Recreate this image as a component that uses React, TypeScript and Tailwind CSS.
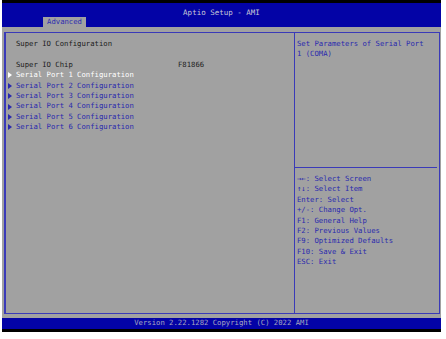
import React from "react";

const mono = { fontFamily: '"DejaVu Sans Mono", "Liberation Mono", monospace' };

function Row({ arrow, children, cls }: { arrow?: boolean; children: React.ReactNode; cls: string }) {
  return (
    <div className={`flex h-[10.4px] items-center ${cls}`}>
      <span className="w-[9px] flex items-center">
        {arrow && (
          <svg width="4" height="6" viewBox="0 0 4 6" className="ml-[1px]">
            <path d="M0 0 L4 3 L0 6 Z" fill="currentColor" />
          </svg>
        )}
      </span>
      <span className="whitespace-pre">{children}</span>
    </div>
  );
}

export default function App() {
  const ports = [1, 2, 3, 4, 5, 6];
  const help = [
    "→←: Select Screen",
    "↑↓: Select Item",
    "Enter: Select",
    "+/-: Change Opt.",
    "F1: General Help",
    "F2: Previous Values",
    "F9: Optimized Defaults",
    "F10: Save & Exit",
    "ESC: Exit",
  ];
  return (
    <div className="w-[446px] h-[339px] bg-white" style={mono}>
      <div className="ml-[2px] w-[439px] h-[332px] flex flex-col text-[7.25px] leading-[10.4px]">
        <div className="h-[3px] bg-black" />
        <div className="h-[24px] bg-[#0303a6] relative">
          <div className="absolute left-0 right-0 top-[5px] text-center text-[#c8c8d8] text-[7.5px]">
            Aptio Setup - AMI
          </div>
          <div className="absolute left-[41px] top-[14px] w-[43px] h-[10px] bg-[#a1a1a1] flex items-center justify-center text-[#2e2eb0]">
            Advanced
          </div>
        </div>
        <div className="flex-1 bg-[#a1a1a1] pt-[5px] pl-[2px] pr-[1px] pb-[4px] flex">
          <div className="flex-1 flex border-t border-r border-b border-l-2 border-[#3a3ab8]">
            <div className="w-[288px] pt-[6px] pl-[1px]">
              <Row cls="text-[#1c1c1c]">Super IO Configuration</Row>
              <Row cls="">{" "}</Row>
              <div className="flex h-[10.4px] items-center text-[#1c1c1c]">
                <span className="w-[9px]" />
                <span className="w-[162px]">Super IO Chip</span>
                <span>F81866</span>
              </div>
              {ports.map((p) => (
                <Row key={p} arrow cls={p === 1 ? "text-white" : "text-[#2a2aae]"}>
                  {`Serial Port ${p} Configuration`}
                </Row>
              ))}
            </div>
            <div className="flex-1 border-l border-[#3a3ab8] flex flex-col">
              <div className="h-[134px] pt-[6px] pl-[2px] text-[#2a2aae]">
                <div>Set Parameters of Serial Port</div>
                <div>1 (COMA)</div>
              </div>
              <div className="h-px bg-[#3a3ab8] mr-[2px]" />
              <div className="pt-[6px] pl-[2px] text-[#2a2aae]">
                {help.map((h) => (
                  <div key={h} className="h-[10.4px] whitespace-pre">{h}</div>
                ))}
              </div>
            </div>
          </div>
        </div>
        <div className="h-[11px] bg-[#0303a6] flex items-center justify-center text-[#a8a8c0]">
          Version 2.22.1282 Copyright (C) 2022 AMI
        </div>
        <div className="h-[3px] bg-black" />
      </div>
    </div>
  );
}
